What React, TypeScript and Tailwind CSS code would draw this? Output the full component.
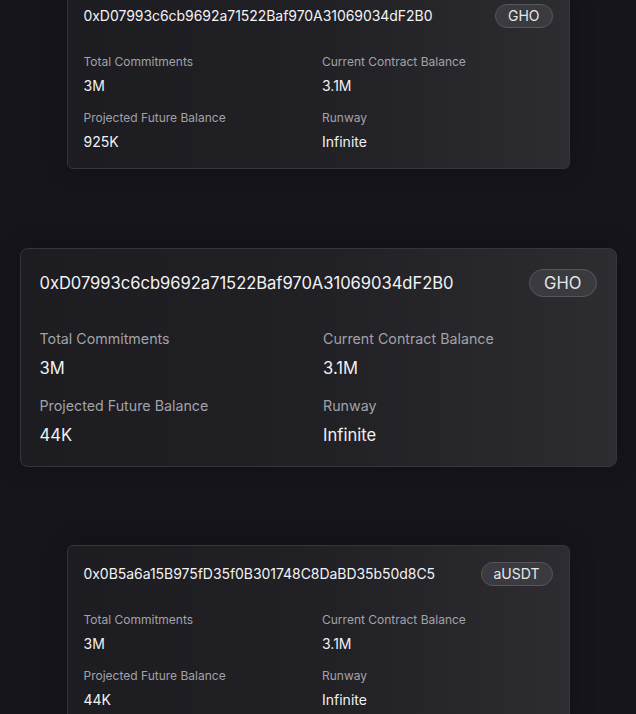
import React from "react";

// ─────────────────────────────────────────────────────────────────────────────
// Data
// ─────────────────────────────────────────────────────────────────────────────

type Stream = {
  address: string;
  token: string;
  commitments: string;
  balance: string;
  projected: string;
  runway: string;
};

const streams: Stream[] = [
  {
    address: "0xD07993c6cb9692a71522Baf970A31069034dF2B0",
    token: "GHO",
    commitments: "3M",
    balance: "3.1M",
    projected: "925K",
    runway: "Infinite",
  },
  {
    address: "0xD07993c6cb9692a71522Baf970A31069034dF2B0",
    token: "GHO",
    commitments: "3M",
    balance: "3.1M",
    projected: "44K",
    runway: "Infinite",
  },
  {
    address: "0x0B5a6a15B975fD35f0B301748C8DaBD35b50d8C5",
    token: "aUSDT",
    commitments: "3M",
    balance: "3.1M",
    projected: "44K",
    runway: "Infinite",
  },
];

// ─────────────────────────────────────────────────────────────────────────────
// Size variants (the large one is the same card at 19/16 scale)
// ─────────────────────────────────────────────────────────────────────────────

const sizes = {
  md: {
    card: "w-[503px] rounded-md p-4",
    header: "h-6 mb-6",
    address: "text-sm",
    badge: "h-6 px-3 text-sm",
    grid: "gap-x-2 gap-y-3",
    cell: "gap-1",
    label: "text-xs leading-5",
    value: "text-sm leading-5",
  },
  lg: {
    card: "w-[597px] rounded-lg pt-[20px] px-[19px] pb-[19px]",
    header: "h-[28px] mb-[30px]",
    address: "text-[16.6px]",
    badge: "h-[28px] px-[14px] text-[16.6px]",
    grid: "gap-x-[10px] gap-y-[14px]",
    cell: "gap-[5px]",
    label: "text-[14.25px] leading-[24px]",
    value: "text-[16.6px] leading-[24px]",
  },
};

// ─────────────────────────────────────────────────────────────────────────────
// Card
// ─────────────────────────────────────────────────────────────────────────────

function Stat({ label, value, s }: { label: string; value: string; s: typeof sizes.md }) {
  return (
    <div className={`flex flex-col ${s.cell}`}>
      <span className={`${s.label} text-[#a2a2a8]`}>{label}</span>
      <span className={`${s.value} text-[#f1f1f3]`}>{value}</span>
    </div>
  );
}

function StreamCard({ stream, size = "md" }: { stream: Stream; size?: "md" | "lg" }) {
  const s = sizes[size];
  return (
    <div
      className={`${s.card} border border-[#35353b] bg-linear-to-r from-[#1c1c21] via-[#202025] to-[#2c2c31] shadow-[0_0_24px_rgba(0,0,0,0.25)]`}
    >
      <div className={`flex items-center justify-between ${s.header}`}>
        <span className={`${s.address} text-[#f3f3f5] tracking-[-0.05px]`}>{stream.address}</span>
        <span
          className={`${s.badge} flex items-center rounded-full border border-[#56565c] bg-[#3a3a3f] text-[#e6e6e8]`}
        >
          {stream.token}
        </span>
      </div>

      <div className={`grid grid-cols-2 ${s.grid}`}>
        <Stat s={s} label="Total Commitments" value={stream.commitments} />
        <Stat s={s} label="Current Contract Balance" value={stream.balance} />
        <Stat s={s} label="Projected Future Balance" value={stream.projected} />
        <Stat s={s} label="Runway" value={stream.runway} />
      </div>
    </div>
  );
}

// ─────────────────────────────────────────────────────────────────────────────
// Page
// ─────────────────────────────────────────────────────────────────────────────

export default function App() {
  return (
    <div
      className="h-[714px] overflow-hidden bg-[#16151b]"
      style={{ fontFamily: "Inter, 'Noto Sans', sans-serif" }}
    >
      <div className="-mt-[13px] flex flex-col items-center">
        <StreamCard stream={streams[0]} />
        <div className="mt-[79px] mb-[78px]">
          <StreamCard stream={streams[1]} size="lg" />
        </div>
        <StreamCard stream={streams[2]} />
      </div>
    </div>
  );
}
